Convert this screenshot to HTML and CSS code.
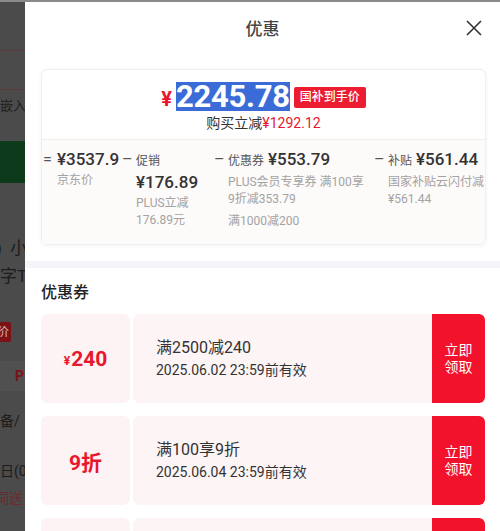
FILE: index.html
```html
<!DOCTYPE html>
<html lang="zh-CN">
<head>
    <meta charset="UTF-8">
    <meta name="viewport" content="width=device-width, initial-scale=1.0">
    <title>优惠</title>
    <link rel="stylesheet" href="styles.css">
</head>
<body>
    <div class="topline"></div>
    <div class="screen">
        <!-- the product page, behind the mask -->
        <div class="page">
            <div class="page-bar"></div>
            <div class="page-bar"></div>
            <div class="page-tabs">嵌入</div>
            <div class="page-green"></div>
            <div class="page-title">) 小</div>
            <div class="page-title big">字T</div>
            <div class="page-tag"><span>价</span></div>
            <div class="page-plus">P</div>
            <div class="page-line">备/</div>
            <div class="page-line">日(0</div>
            <div class="page-line red">词送</div>
        </div>

        <div class="sheet">
            <div class="sheet-head">
                <h3>优惠</h3>
                <button class="close" type="button">
                    <svg width="16" height="16" viewBox="0 0 16 16">
                        <path d="M1 1 L15 15 M15 1 L1 15" stroke="#333" stroke-width="1.6" fill="none"/>
                    </svg>
                </button>
            </div>

            <div class="sheet-body">
                <div class="price-card">
                    <div class="price-top">
                        <div class="price-row">
                            <span class="yen">¥</span><span class="num">2245.78</span><span class="tag">国补到手价</span>
                        </div>
                        <div class="save">购买立减<span>¥1292.12</span></div>
                    </div>
                    <div class="calc">
                        <div class="calc-item">
                            <i class="op">=</i>
                            <div class="calc-body w1">
                                <div class="calc-head"><span class="val">¥3537.9</span></div>
                                <p class="desc">京东价</p>
                            </div>
                        </div>
                        <div class="calc-item">
                            <i class="op">–</i>
                            <div class="calc-body w2">
                                <div class="calc-head"><span class="label">促销</span> <span class="val">¥176.89</span></div>
                                <p class="desc">PLUS立减176.89元</p>
                            </div>
                        </div>
                        <div class="calc-item">
                            <i class="op">–</i>
                            <div class="calc-body w3">
                                <div class="calc-head"><span class="label">优惠券</span> <span class="val">¥553.79</span></div>
                                <p class="desc">PLUS会员专享券 满100享9折减353.79</p>
                                <p class="desc more">满1000减200</p>
                            </div>
                        </div>
                        <div class="calc-item">
                            <i class="op">–</i>
                            <div class="calc-body w4">
                                <div class="calc-head"><span class="label">补贴</span> <span class="val">¥561.44</span></div>
                                <p class="desc">国家补贴云闪付减¥561.44</p>
                            </div>
                        </div>
                    </div>
                </div>
            </div>

            <div class="divider"></div>

            <div class="coupons">
                <h4>优惠券</h4>
                <div class="coupon">
                    <div class="coupon-amount"><small>¥</small>240</div>
                    <div class="coupon-main">
                        <p class="coupon-name">满2500减240</p>
                        <p class="coupon-date">2025.06.02 23:59前有效</p>
                    </div>
                    <button class="coupon-btn" type="button">立即<br>领取</button>
                </div>
                <div class="coupon">
                    <div class="coupon-amount">9折</div>
                    <div class="coupon-main">
                        <p class="coupon-name">满100享9折</p>
                        <p class="coupon-date">2025.06.04 23:59前有效</p>
                    </div>
                    <button class="coupon-btn" type="button">立即<br>领取</button>
                </div>
                <div class="coupon">
                    <div class="coupon-amount"><small>¥</small>20</div>
                    <div class="coupon-main">
                        <p class="coupon-name">满200减20</p>
                        <p class="coupon-date">2025.06.05 23:59前有效</p>
                    </div>
                    <button class="coupon-btn" type="button">立即<br>领取</button>
                </div>
            </div>
        </div>
    </div>
</body>
</html>
```

FILE: styles.css
```css
* {
    box-sizing: border-box;
}

body {
    margin: 0;
    width: 500px;
    height: 531px;
    overflow: hidden;
    font-family: Roboto, "Noto Sans CJK SC", sans-serif;
    color: #333;
    background: #fff;
}

p {
    margin: 0;
}

.topline {
    height: 2px;
    background: #8a8a8a;
}

.screen {
    display: flex;
    height: 529px;
}

/* page under the mask */
.page {
    width: 25px;
    flex-shrink: 0;
    background: #4b4b4b;
    overflow: hidden;
    white-space: nowrap;
    color: #1c1c1c;
}

.page-bar {
    height: 49px;
    border-bottom: 1px solid #5f3b3d;
}

.page-bar + .page-bar {
    height: 39px;
}

.page-tabs {
    height: 51px;
    padding-top: 7px;
    font-size: 13px;
    line-height: 18px;
}

.page-green {
    height: 42px;
    background: #0c3a1a;
}

.page-title {
    margin-top: 54px;
    margin-left: -4px;
    font-size: 17px;
    line-height: 22px;
    letter-spacing: 2px;
}

.page-title.big {
    margin-top: 6px;
    margin-left: 0;
    letter-spacing: 0;
}

.page-tag {
    margin-top: 35px;
    height: 20px;
}

.page-tag span {
    display: block;
    width: 11px;
    height: 20px;
    background: #7c1218;
    color: #d9b8ba;
    font-size: 12px;
    line-height: 20px;
    text-indent: -3px;
    overflow: hidden;
    border-radius: 0 2px 2px 0;
}

.page-plus {
    margin-top: 19px;
    height: 30px;
    background: #505050;
    color: #7c1218;
    font-weight: 700;
    font-size: 14px;
    line-height: 30px;
    text-align: right;
    padding-right: 1px;
}

.page-line {
    margin-top: 20px;
    font-size: 14px;
    line-height: 20px;
}

.page-line + .page-line {
    margin-top: 30px;
}

.page-line.red {
    margin-top: 7px;
    color: #6e2a2c;
    text-indent: -5px;
}

/* sheet */
.sheet {
    flex: 1;
    min-width: 0;
    overflow: hidden;
    background: #fff;
}

.sheet-head {
    height: 50px;
    position: relative;
    display: flex;
    align-items: center;
    justify-content: center;
}

.sheet-head h3 {
    margin: 0;
    font-size: 17px;
    font-weight: 500;
    color: #444;
}

.close {
    position: absolute;
    right: 18px;
    top: 18px;
    width: 16px;
    height: 16px;
    padding: 0;
    border: none;
    background: none;
    line-height: 0;
}

.sheet-body {
    padding: 17px 14px 0 16px;
}

.price-card {
    border: 1px solid #efefef;
    border-radius: 6px;
    box-shadow: 0 1px 4px rgba(0, 0, 0, 0.05);
    overflow: hidden;
}

.price-top {
    padding: 11px 0 6px;
    text-align: center;
}

.price-row {
    display: flex;
    justify-content: center;
    align-items: center;
    height: 30px;
}

.yen {
    color: #e8172d;
    font-size: 20px;
    font-weight: 700;
    margin-right: 4px;
    margin-top: 5px;
}

.num {
    background: #3a6bd6;
    color: #fff;
    font-size: 31px;
    font-weight: 700;
    line-height: 29px;
    letter-spacing: -0.3px;
}

.tag {
    margin-left: 4px;
    margin-top: 3px;
    padding: 0 6px;
    height: 21px;
    line-height: 21px;
    border-radius: 2px;
    background: #ec1c31;
    color: #fff;
    font-size: 12px;
    font-weight: 500;
}

.save {
    margin-top: 2px;
    font-size: 14px;
    line-height: 20px;
    color: #333;
}

.save span {
    color: #e8172d;
}

.calc {
    display: flex;
    align-items: flex-start;
    padding: 9px 0 14px 1px;
    background: #fdfafa;
    border-top: 1px solid #f3eeee;
}

.calc-item {
    display: flex;
    align-items: flex-start;
    margin-right: 5px;
}

.calc-item:last-child {
    margin-right: 0;
}

.op {
    width: 8px;
    margin-right: 6px;
    font-style: normal;
    font-size: 16px;
    line-height: 22px;
    color: #555;
}

.calc-head {
    line-height: 21px;
}

.label {
    font-size: 12px;
    color: #555;
}

.val {
    font-size: 17px;
    font-weight: 500;
    color: #333;
}

.desc {
    margin-top: 2px;
    font-size: 12px;
    line-height: 17px;
    color: #a3a3a3;
}

.desc.more {
    margin-top: 5px;
}

.w1 { width: 60px; }
.w2 { width: 73px; }
.w3 { width: 141px; }
.w4 { width: 97px; }

.divider {
    height: 7px;
    margin-top: 16px;
    background: #f4f5fa;
}

.coupons {
    padding: 14px 15px 0 16px;
}

.coupons h4 {
    margin: 0 0 10px;
    font-size: 16px;
    line-height: 22px;
    font-weight: 500;
    color: #222;
}

.coupon {
    display: flex;
    height: 89px;
    margin-bottom: 13px;
}

.coupon-amount {
    width: 89px;
    flex-shrink: 0;
    display: flex;
    align-items: center;
    justify-content: center;
    background: #fdf3f5;
    border-radius: 6px;
    color: #e8172d;
    font-size: 21px;
    font-weight: 700;
}

.coupon-amount small {
    font-size: 12px;
    margin-top: 5px;
    margin-right: 1px;
}

.coupon-main {
    flex: 1;
    position: relative;
    margin-left: 3px;
    padding-left: 23px;
    display: flex;
    flex-direction: column;
    justify-content: center;
    background: #fdf4f5;
    border-radius: 6px 0 0 6px;
}

.coupon-main::before,
.coupon-main::after {
    content: "";
    position: absolute;
    left: -6px;
    width: 9px;
    height: 9px;
    border-radius: 50%;
    background: #fff;
}

.coupon-main::before {
    top: -5px;
}

.coupon-main::after {
    bottom: -5px;
}

.coupon-name {
    font-size: 16px;
    line-height: 22px;
    color: #333;
}

.coupon-date {
    font-size: 14px;
    line-height: 22px;
    color: #333;
}

.coupon-btn {
    width: 53px;
    flex-shrink: 0;
    border: none;
    border-radius: 0 6px 6px 0;
    background: #f3122c;
    color: #fff;
    font-family: inherit;
    font-size: 14px;
    line-height: 17px;
    padding: 0;
}
```
